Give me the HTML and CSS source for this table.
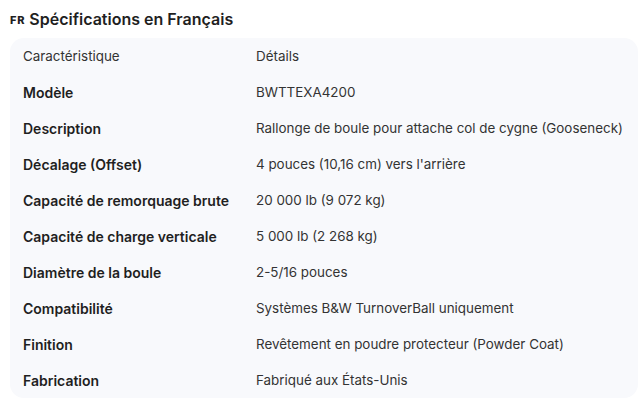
FILE: index.html
```html
<!DOCTYPE html>
<html lang="fr">
<head>
<meta charset="utf-8">
<link rel="stylesheet" href="styles.css">
</head>
<body>
<h2 class="title"><span class="flag">FR</span> Spécifications en Français</h2>
<div class="card">
  <div class="row head"><div class="k">Caractéristique</div><div class="v">Détails</div></div>
  <div class="row"><div class="k">Modèle</div><div class="v">BWTTEXA4200</div></div>
  <div class="row"><div class="k">Description</div><div class="v">Rallonge de boule pour attache col de cygne (Gooseneck)</div></div>
  <div class="row"><div class="k">Décalage (Offset)</div><div class="v">4 pouces (10,16 cm) vers l'arrière</div></div>
  <div class="row"><div class="k">Capacité de remorquage brute</div><div class="v">20 000 lb (9 072 kg)</div></div>
  <div class="row"><div class="k">Capacité de charge verticale</div><div class="v">5 000 lb (2 268 kg)</div></div>
  <div class="row"><div class="k">Diamètre de la boule</div><div class="v">2-5/16 pouces</div></div>
  <div class="row"><div class="k">Compatibilité</div><div class="v">Systèmes B&amp;W TurnoverBall uniquement</div></div>
  <div class="row"><div class="k">Finition</div><div class="v">Revêtement en poudre protecteur (Powder Coat)</div></div>
  <div class="row"><div class="k">Fabrication</div><div class="v">Fabriqué aux États-Unis</div></div>
</div>
</body>
</html>
```
FILE: styles.css
```css
html, body { margin: 0; padding: 0; background: #ffffff; }
body {
  font-family: Inter, Roboto, "Liberation Sans", sans-serif;
  color: #1f1f1f;
  padding: 8px 8px 0 10px;
}
.title {
  margin: 0;
  height: 30px;
  font-size: 16px;
  font-weight: 600;
  line-height: 20px;
  color: #1f1f1f;
  display: flex;
  align-items: center;
  gap: 4px;
  margin-top: -4px;
}
.flag { font-size: 11px; font-weight: 800; letter-spacing: 0.8px; padding-top: 2px; }
.card {
  background: #f8f9fc;
  border-radius: 14px;
  padding: 0 13px;
  margin-right: -2px;
  margin-top: 4px;
}
.row {
  display: grid;
  grid-template-columns: 233px 1fr;
  height: 36px;
  align-items: center;
  font-size: 13.4px;
}
.row .k { font-weight: 600; font-size: 14px; }
.row.head .k { font-weight: 400; font-size: 13.4px; color: #333; }
.row .v { color: #333; }
```
